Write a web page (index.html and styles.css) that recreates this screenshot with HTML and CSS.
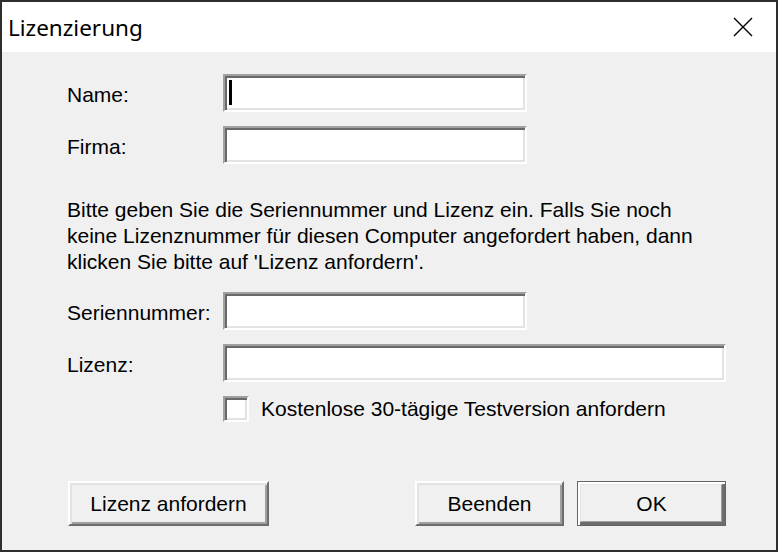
FILE: index.html
```html
<!DOCTYPE html>
<html lang="de">
<head>
    <meta charset="UTF-8">
    <title>Lizenzierung</title>
    <link rel="stylesheet" href="styles.css">
</head>
<body>
    <div class="window">
        <div class="titlebar">
            <span class="title">Lizenzierung</span>
            <svg class="close" width="20" height="20" viewBox="0 0 20 20">
                <path d="M1 1 L19 19 M19 1 L1 19" stroke="#000" stroke-width="1.4" fill="none"/>
            </svg>
        </div>

        <div class="content">
            <div class="fields">
                <label for="name">Name:</label>
                <div class="caretWrap">
                    <input type="text" id="name" class="edit short">
                    <span class="caret"></span>
                </div>
                <label for="firma">Firma:</label>
                <input type="text" id="firma" class="edit short">
            </div>

            <p class="hint">Bitte geben Sie die Seriennummer und Lizenz ein. Falls Sie noch<br>keine Lizenznummer für diesen Computer angefordert haben, dann<br>klicken Sie bitte auf 'Lizenz anfordern'.</p>

            <div class="fields">
                <label for="serial">Seriennummer:</label>
                <input type="text" id="serial" class="edit short">
                <label for="lizenz">Lizenz:</label>
                <input type="text" id="lizenz" class="edit">
                <span></span>
                <label class="check"><input type="checkbox" class="box">Kostenlose 30-tägige Testversion anfordern</label>
            </div>

            <div class="buttons">
                <button class="btn wide">Lizenz anfordern</button>
                <div class="right">
                    <button class="btn">Beenden</button>
                    <button class="btn default">OK</button>
                </div>
            </div>
        </div>
    </div>
</body>
</html>
```

FILE: styles.css
```css
html, body {
    margin: 0;
    padding: 0;
}
body {
    font-family: "Liberation Sans", Arial, sans-serif;
    font-size: 21px;
    color: #000;
    background: #f0f0f0;
}
.window {
    width: 778px;
    height: 552px;
    box-sizing: border-box;
    border: 2px solid #2e2e2e;
    background: #f0f0f0;
    display: flex;
    flex-direction: column;
}
.titlebar {
    height: 50px;
    background: #fff;
    display: flex;
    align-items: center;
    justify-content: space-between;
    padding: 0 23px 0 6px;
}
.title {
    font-family: "Noto Sans", "Open Sans", sans-serif;
    font-size: 22.5px;
    margin-top: 1px;
}
.close {
    display: block;
}
.content {
    padding: 22px 50px 0 64px;
}
.fields {
    display: grid;
    grid-template-columns: 157px 1fr;
    row-gap: 14px;
    align-items: center;
}
.fields label {
    padding-left: 1px;
    line-height: 26px;
    padding-top: 4px;
}
.edit {
    display: block;
    box-sizing: border-box;
    height: 38px;
    margin: 0;
    padding: 0 2px;
    font: inherit;
    background: #fff;
    border: 2px solid;
    border-color: #a0a0a0 #fff #fff #a0a0a0;
    box-shadow: inset 2px 2px #696969, inset -2px -2px #e3e3e3;
    outline: none;
}
.short {
    width: 304px;
}
.fields .edit:not(.short) {
    width: 100%;
}
.caretWrap {
    position: relative;
}
.caret {
    position: absolute;
    left: 6px;
    top: 6px;
    width: 3px;
    height: 25px;
    background: #000;
}
.hint {
    margin: 33px 0 17px 1px;
    line-height: 26px;
    white-space: nowrap;
}
.check {
    display: flex;
    align-items: center;
    gap: 12px;
    height: 26px;
    padding-left: 0 !important;
    padding-top: 0 !important;
    white-space: nowrap;
}
.box {
    appearance: none;
    -webkit-appearance: none;
    margin: 0;
    width: 26px;
    height: 26px;
    box-sizing: border-box;
    background: #fff;
    border: 2px solid;
    border-color: #a0a0a0 #fff #fff #a0a0a0;
    box-shadow: inset 2px 2px #696969, inset -2px -2px #e3e3e3;
}
.buttons {
    display: flex;
    justify-content: space-between;
    margin-top: 59px;
}
.right {
    display: flex;
    gap: 13px;
}
.btn {
    box-sizing: border-box;
    width: 149px;
    height: 45px;
    margin: 0;
    padding: 0;
    font: inherit;
    color: #000;
    background: #f0f0f0;
    border: 2px solid;
    border-color: #fff #6d6d6d #6d6d6d #fff;
    box-shadow: inset 2px 2px #e3e3e3, inset -2px -2px #a0a0a0;
}
.wide {
    width: 201px;
    margin-left: 2px;
}
.default {
    border: 1px solid #646464;
    box-shadow: inset 2px 2px #fff, inset -3px -3px #6d6d6d, inset 3px 3px #e3e3e3, inset -4px -4px #a0a0a0;
}
```
